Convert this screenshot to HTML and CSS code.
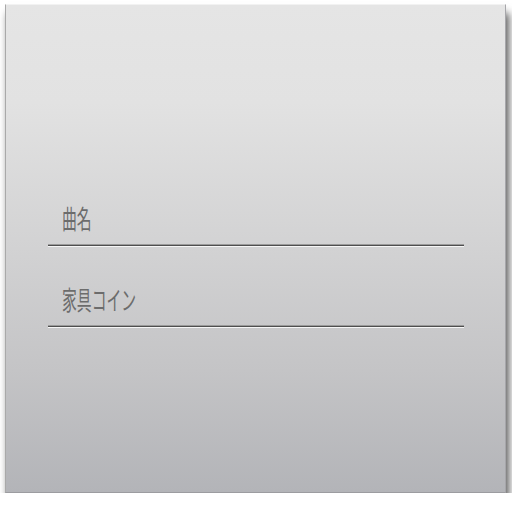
FILE: index.html
```html
<!DOCTYPE html>
<html lang="ja">
<head>
<meta charset="utf-8">
<link rel="stylesheet" href="styles.css">
</head>
<body>
<div class="panel">
  <div class="field field-first">
    <div class="label"><span class="text">曲名</span></div>
    <div class="rule"></div>
  </div>
  <div class="field">
    <div class="label"><span class="text">家具コイン</span></div>
    <div class="rule"></div>
  </div>
</div>
</body>
</html>
```
FILE: styles.css
```css
html, body {
  margin: 0;
  padding: 0;
  background: #ffffff;
}
body {
  padding: 4px 0 0 5px;
  font-family: "Noto Sans CJK JP", "Noto Sans", sans-serif;
}
.panel {
  box-sizing: border-box;
  width: 501px;
  height: 489px;
  background: linear-gradient(to bottom, #e5e5e5 0%, #e2e2e2 20%, #d2d2d3 50%, #c4c4c6 75%, #b3b4b8 100%);
  border-top: 1px solid #f2f2f2;
  border-left: 1px solid #a9a9a9;
  border-bottom: 1px solid #9c9ca0;
  border-right: 1px solid #a6a6aa;
  box-shadow: 0 2px 0 #f2f2f2, 3px 9px 8px rgba(0, 0, 0, 0.65);
  padding: 198px 0 0 42px;
}
.field {
  width: 416px;
  margin-top: 38px;
}
.field-first {
  margin-top: 0;
}
.label {
  height: 30px;
  line-height: 30px;
  padding-left: 14px;
  margin-bottom: 12px;
  overflow: visible;
  white-space: nowrap;
}
.text {
  display: inline-block;
  font-size: 26px;
  color: #6c6c6c;
  transform: scaleX(0.57);
  transform-origin: left center;
}
.rule {
  height: 1px;
  background: #4f4f4f;
  box-shadow: 0 -1px 0 #9a9a9a, 0 1px 0 #f6f6f6;
  margin-top: 1px;
}
```
